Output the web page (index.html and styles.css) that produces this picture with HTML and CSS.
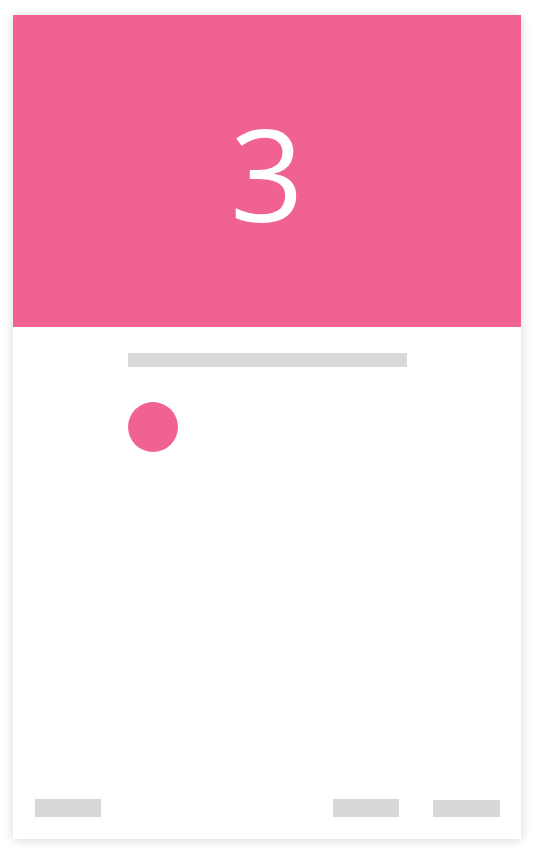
FILE: index.html
```html
<!DOCTYPE html>
<html>
<head>
<meta charset="utf-8">
<link rel="stylesheet" href="styles.css">
</head>
<body>
<div class="card">
  <div class="header"><span class="num">3</span></div>
  <div class="content">
    <div class="line"></div>
    <div class="dot"></div>
  </div>
  <div class="footer">
    <div class="btn"></div>
    <div class="spacer"></div>
    <div class="btn"></div>
    <div class="btn btn-last"></div>
  </div>
</div>
</body>
</html>
```
FILE: styles.css
```css
html, body {
  margin: 0;
  padding: 0;
  background: #ffffff;
}
body {
  padding: 15px 13px;
  font-family: "Open Sans", "Noto Sans", sans-serif;
}
.card {
  width: 508px;
  height: 824px;
  background: #ffffff;
  box-shadow: 0 1px 10px rgba(0, 0, 0, 0.16);
  display: flex;
  flex-direction: column;
}
.header {
  height: 312px;
  background: #f06292;
  display: flex;
  align-items: center;
  justify-content: center;
}
.num {
  color: #ffffff;
  font-size: 129px;
  line-height: 1;
  font-weight: 400;
  margin-top: 2px;
}
.content {
  flex: 1;
  padding: 26px 0 0 115px;
  display: flex;
  flex-direction: column;
  gap: 35px;
}
.line {
  width: 279px;
  height: 14px;
  background: #d8d8d8;
}
.dot {
  width: 50px;
  height: 50px;
  border-radius: 50%;
  background: #f06292;
}
.footer {
  display: flex;
  align-items: flex-end;
  padding: 0 21px 22px 22px;
}
.btn {
  width: 66px;
  height: 18px;
  background: #d8d8d8;
}
.btn-last {
  width: 67px;
  height: 17px;
  margin-left: 34px;
}
.spacer {
  flex: 1;
}
```
